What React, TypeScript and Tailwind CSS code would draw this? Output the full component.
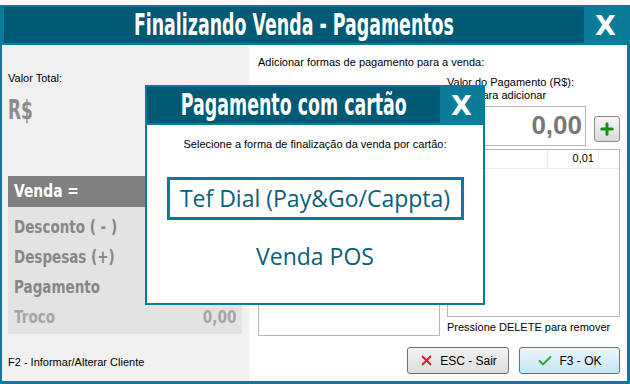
import { X, Check, Plus } from 'lucide-react';

const cond = "font-['DejaVu_Sans',sans-serif] font-bold";
const ui = "font-['Liberation_Sans',Arial,sans-serif]";

function TitleBar({ title }: { title: string }) {
  return (
    <div className="flex h-[40px] bg-[#0a7c99] p-[2px] pr-0">
      <div className={`flex min-w-0 flex-1 items-center justify-center overflow-hidden bg-[#005a73] text-white ${cond} text-[30px] leading-none`}>
        <span className="inline-block shrink-0 scale-x-[0.58] whitespace-nowrap">{title}</span>
      </div>
      <div className="flex w-[43px] shrink-0 items-center justify-center text-[27px] font-bold leading-none text-white font-['DejaVu_Sans',sans-serif]">
        X
      </div>
    </div>
  );
}

function SummaryRow({ label, value, dim }: { label: string; value?: string; dim?: boolean }) {
  return (
    <div className={`flex h-[30px] items-center justify-between px-[6px] ${cond} text-[18px] leading-none ${dim ? 'text-[#a5a5a5]' : 'text-[#868686]'}`}>
      <span className="inline-block origin-left scale-x-[0.75] whitespace-nowrap">{label}</span>
      {value && <span className="inline-block origin-right scale-x-[0.76]">{value}</span>}
    </div>
  );
}

export default function App() {
  return (
    <div className={`h-[384px] w-[630px] bg-white pt-[5px] ${ui} text-[11px] text-black`}>
      <div className="relative flex h-[379px] flex-col border-b-[3px] border-l-2 border-r-[3px] border-[#0a7c99]">
        <TitleBar title="Finalizando Venda - Pagamentos" />

        <div className="flex flex-1">
          {/* Left panel */}
          <div className="flex w-[247px] flex-col bg-[#f0f0f0] px-[6px]">
            <p className="mt-[25px]">Valor Total:</p>
            <p className={`mt-[9px] ${cond} text-[27px] leading-none text-[#8c8c8c]`}>
              <span className="inline-block origin-left scale-x-[0.625]">R$</span>
            </p>
            <div className="mt-[53px] w-[234px]">
              <div className={`flex h-[31px] items-center bg-[#808080] px-[6px] ${cond} text-[18px] leading-none text-white`}>
                <span className="inline-block origin-left scale-x-[0.77]">Venda =</span>
              </div>
              <div className="bg-[#e3e3e3] pb-[2px] pt-[5px]">
                <SummaryRow label="Desconto ( - )" />
                <SummaryRow label="Despesas (+)" />
                <SummaryRow label="Pagamento" />
                <SummaryRow label="Troco" value="0,00" dim />
              </div>
            </div>
            <p className="mt-[20px]">F2 - Informar/Alterar Cliente</p>
          </div>

          {/* Right panel */}
          <div className="flex flex-1 flex-col bg-white pl-[9px]">
            <p className="mt-[9px]">Adicionar formas de pagamento para a venda:</p>
            <div className="flex gap-[7px]">
              <div className="mt-[14px] h-[251px] w-[182px] border border-[#b5b5b5] bg-white" />
              <div className="flex w-[173px] flex-col">
                <p className="mt-[5px] leading-[13px]">Valor do Pagamento (R$):</p>
                <p className="leading-[13px]">Enter para adicionar</p>
                <div className="mt-[4px] flex items-start gap-[8px]">
                  <div className={`flex h-[40px] w-[139px] items-center justify-end border border-[#b5b5b5] bg-white pr-[3px] text-[26px] font-bold text-[#777] ${ui}`}>
                    0,00
                  </div>
                  <div className="mt-[10px] flex h-[26px] w-[26px] items-center justify-center rounded-[3px] border border-[#8a8a8a] bg-gradient-to-b from-[#f6f6f6] to-[#dadada]">
                    <Plus className="size-[18px] text-[#168f16]" strokeWidth={4} />
                  </div>
                </div>
                <div className="mt-[3px] h-[168px] border border-[#b5b5b5] bg-white">
                  <div className="flex h-[19px] border-b border-[#ececec]">
                    <div className="flex-1 border-r border-[#ececec]" />
                    <div className="flex w-[51px] items-center justify-end border-r border-[#ececec] pr-[4px]">0,01</div>
                    <div className="w-[20px]" />
                  </div>
                </div>
                <p className="mt-[2px]">Pressione DELETE para remover</p>
              </div>
            </div>
            <div className="mt-auto mb-[7px] flex justify-end gap-[10px] pr-[7px]">
              <button className="flex h-[27px] w-[102px] items-center justify-center gap-[6px] rounded-[3px] border border-[#707070] bg-gradient-to-b from-[#f3f3f3] to-[#dddddd] text-[12px]">
                <X className="size-[15px] text-[#e3222b]" strokeWidth={3.5} />
                ESC - Sair
              </button>
              <button className="flex h-[27px] w-[101px] items-center justify-center gap-[6px] rounded-[3px] border border-[#3c7fb1] bg-gradient-to-b from-[#eaf6fd] to-[#c6e6f7] text-[12px]">
                <Check className="size-[16px] text-[#2da52d]" strokeWidth={3} />
                F3 - OK
              </button>
            </div>
          </div>
        </div>

        {/* Modal */}
        <div className="absolute left-[143px] top-[80px] flex h-[220px] w-[340px] flex-col border-2 border-t-0 border-l-0 border-[#0a7c99] bg-white">
          <TitleBar title="Pagamento com cartão" />
          <div className="flex flex-1 flex-col items-center border-l-2 border-[#0a7c99]">
            <p className="mt-[11px]">Selecione a forma de finalização da venda por cartão:</p>
            <div className="mt-[24px] flex h-[43px] w-[297px] items-center justify-center border-[3px] border-[#0a7c99] text-[23px] text-[#0b5e78] font-['Open_Sans',sans-serif]">
              Tef Dial (Pay&amp;Go/Cappta)
            </div>
            <p className="mt-[19px] text-[23px] text-[#0b5e78] font-['Open_Sans',sans-serif]">Venda POS</p>
          </div>
        </div>
      </div>
    </div>
  );
}
